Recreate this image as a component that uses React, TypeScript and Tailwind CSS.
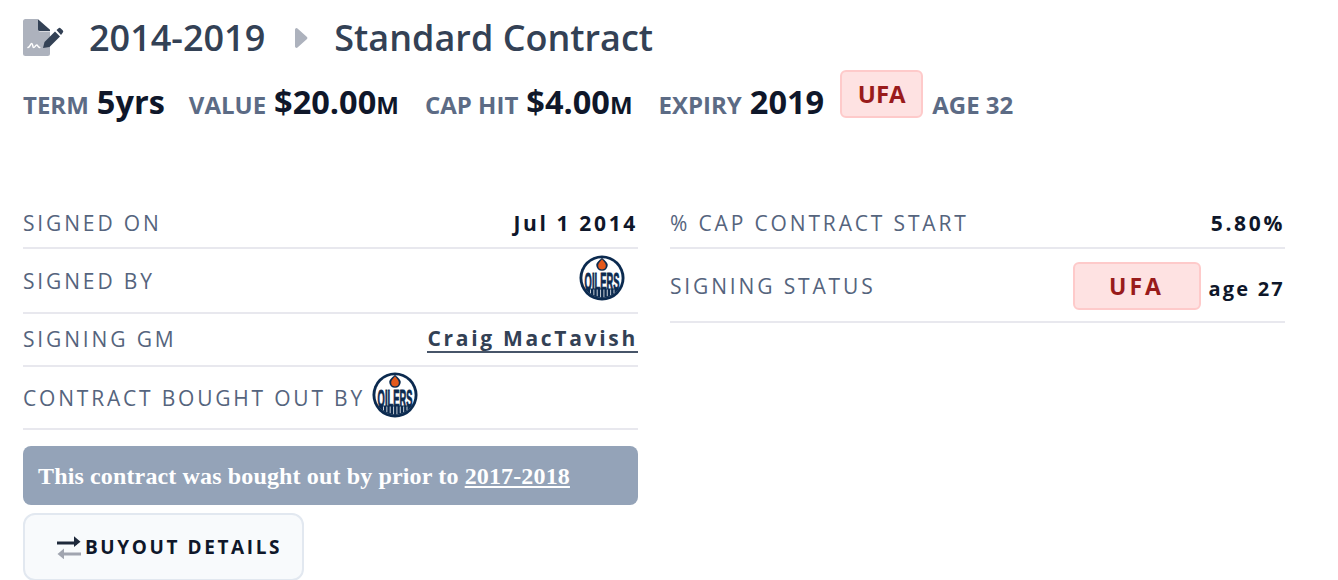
const sans = { fontFamily: '"Open Sans", sans-serif' };

function OilersLogo() {
  return (
    <svg width="46" height="46" viewBox="0 0 48 48" className="-mt-[6px] shrink-0">
      <circle cx="24" cy="24" r="23.500" fill="#0b2a4f" />
      <circle cx="24" cy="24" r="20.500" fill="#fff" />
      <path d="M6.500 35h35a20.500 20.500 0 0 1-35 0Z" fill="#0b2a4f" />
      <path d="M24 2.500C25.500 5 30 7 30 10.500a6 6 0 0 1-12 0C18 7 22.500 5 24 2.500Z" fill="#0b2a4f" />
      <path d="M24 4.500C25.500 7 28 8 28 11a4 4 0 0 1-8 0C20 8 22.500 7 24 4.500Z" fill="#e4591c" />
      <g transform="translate(24 36) scale(0.39 1)">
        <text x="0" y="0" textAnchor="middle" fontFamily="Liberation Sans" fontWeight="700" fontSize="25" stroke="#0b2a4f" strokeWidth="1" fill="#0b2a4f">OILERS</text>
      </g>
      <path d="M12 36v4M15.500 36v6M19 36v7M22.500 36v8M26 36v8M29.500 36v7M33 36v6M36.500 36v4" stroke="#fff" strokeWidth="0.800" />
    </svg>
  );
}

function SignatureIcon() {
  return (
    <svg width="42" height="37" viewBox="0 0 42 37" className="shrink-0">
      <path d="M2.500 0H15v10.500a2 2 0 0 0 2 2h10V34.500a2.500 2.500 0 0 1-2.500 2.500h-22A2.500 2.500 0 0 1 0 34.500V2.500A2.500 2.500 0 0 1 2.500 0Z" fill="#adb2bd" />
      <path d="M15 0.300 L27 10.800 V12 H16.500a1.500 1.500 0 0 1-1.500-1.500Z" fill="#334155" />
      <path d="M5 28.500c2-.5 2.500-4 3.700-4 1.300 0 .7 4 2 4 1.300 0 1.600-2.400 3-2.400 1.200 0 1.200 2 3 2.400" fill="none" stroke="#fff" strokeWidth="1.500" strokeLinecap="round" />
      <path d="M20 29l1.500-6 10.500-10.500 5 5-10.500 10.500Z" fill="#334155" />
      <path d="M33.500 11l1.800-1.600a1.800 1.800 0 0 1 2.500 0l1.900 1.900a1.800 1.800 0 0 1 0 2.500L38 16Z" fill="#334155" />
    </svg>
  );
}

function ExchangeIcon() {
  return (
    <svg width="26" height="24" viewBox="0 0 26 24" className="shrink-0">
      <path d="M1 8h20" stroke="#1e293b" strokeWidth="3" />
      <path d="M18 2l6.500 6-6.500 6Z" fill="#1e293b" transform="translate(0 -0.500) scale(1 0.9)" />
      <path d="M5 19h20" stroke="#a1a5b0" strokeWidth="3" />
      <path d="M8 13l-6.500 6 6.500 6Z" fill="#a1a5b0" transform="translate(0 1.800) scale(1 0.9)" />
    </svg>
  );
}

function Row({ label, children, className }: { label: string; children?: React.ReactNode; className: string }) {
  return (
    <div className={`flex items-center justify-between border-b-2 border-[#e8e8ee] ${className}`}>
      <span className="pt-[2px] text-[21px] tracking-[2.850px] text-[#55647d] uppercase">{label}</span>
      {children}
    </div>
  );
}

function Stat({ label, value, unit, className }: { label: string; value?: string; unit?: string; className?: string }) {
  return (
    <span className={`-mb-[5px] flex items-baseline leading-[36px] ${className ?? ""}`}>
      <span className="text-[24px] font-bold text-[#5c6b85]">{label}</span>
      {value && <span className="ml-2 text-[32.500px] font-bold text-[#0f172a]">{value}</span>}
      {unit && <span className="text-[24px] font-bold text-[#0f172a]">{unit}</span>}
    </span>
  );
}

export default function App() {
  return (
    <div className="h-[580px] w-[1338px] overflow-hidden bg-white pt-[19px] pl-[23px]" style={sans}>
      <div className="flex h-[37px] items-center">
        <SignatureIcon />
        <span className="ml-[24px] text-[36px] font-semibold text-[#334155]">2014-2019</span>
        <svg width="14" height="22" viewBox="0 0 14 22" className="ml-[29px]">
          <path d="M1 2.500a1.500 1.500 0 0 1 2.500-1L13 10a1.500 1.500 0 0 1 0 2l-9.500 8.500a1.500 1.500 0 0 1-2.500-1Z" fill="#adb2bd" />
        </svg>
        <span className="ml-[26px] text-[36px] font-semibold text-[#334155]">Standard Contract</span>
      </div>

      <div className="mt-[14px] flex h-[48px] items-end">
        <Stat label="TERM" value="5yrs" />
        <Stat label="VALUE" value="$20.00" unit="M" className="ml-[24px]" />
        <Stat label="CAP HIT" value="$4.00" unit="M" className="ml-[26px]" />
        <Stat label="EXPIRY" value="2019" className="ml-[26px]" />
        <span className="ml-[16px] flex h-[48px] w-[83px] items-center justify-center rounded-md border-2 border-[#fecaca] bg-[#fee2e2] text-[24px] font-bold text-[#991b1b]">UFA</span>
        <Stat label="AGE 32" className="ml-[9px]" />
      </div>

      <div className="mt-[81px] flex gap-[32px]">
        <div className="w-[615px]">
          <Row label="Signed on" className="h-[50px]">
            <span className="pt-[2px] text-[21px] font-bold tracking-[2.650px] text-[#0f172a]">Jul 1 2014</span>
          </Row>
          <Row label="Signed by" className="h-[65px]">
            <span className="mr-[13px]"><OilersLogo /></span>
          </Row>
          <Row label="Signing GM" className="h-[53px] pb-[2px]">
            <span className="mt-[2px] border-b-2 border-[#475569] text-[21px] leading-[25px] font-bold tracking-[2.700px] text-[#334155]">Craig MacTavish</span>
          </Row>
          <div className="flex h-[63px] items-center gap-[7px] border-b-2 border-[#e8e8ee]">
            <span className="pt-[2px] text-[21px] tracking-[2.800px] text-[#55647d] uppercase">Contract bought out by</span>
            <OilersLogo />
          </div>
          <div className="mt-[16px] flex h-[59px] items-center rounded-lg bg-[#94a3b8] pl-[15px] text-[24px] font-bold tracking-[0.140px] text-white" style={{ fontFamily: '"Liberation Serif", serif' }}>
            <span>This contract was bought out by prior to <span className="underline">2017-2018</span></span>
          </div>
          <div className="mt-[8px] flex h-[68px] w-[281px] items-center rounded-xl border-2 border-[#e2e8f0] bg-[#f8fafc] pl-[31px]">
            <ExchangeIcon />
            <span className="ml-[3px] text-[19px] font-bold tracking-[2.600px] text-[#0f172a]">BUYOUT DETAILS</span>
          </div>
        </div>
        <div className="w-[615px]">
          <Row label="% cap contract start" className="h-[50px]">
            <span className="pt-[2px] text-[21px] font-bold tracking-[2.650px] text-[#0f172a]">5.80%</span>
          </Row>
          <Row label="Signing status" className="h-[74px] pt-[2px]">
            <span className="flex items-center">
              <span className="flex h-[48px] w-[128px] items-center justify-center rounded-md border-2 border-[#fecaca] bg-[#fee2e2] text-[23px] font-bold tracking-[3px] text-[#991b1b]">UFA</span>
              <span className="mt-[6px] ml-[8px] text-[20px] font-bold tracking-[2.200px] text-[#0f172a]">age 27</span>
            </span>
          </Row>
        </div>
      </div>
    </div>
  );
}
